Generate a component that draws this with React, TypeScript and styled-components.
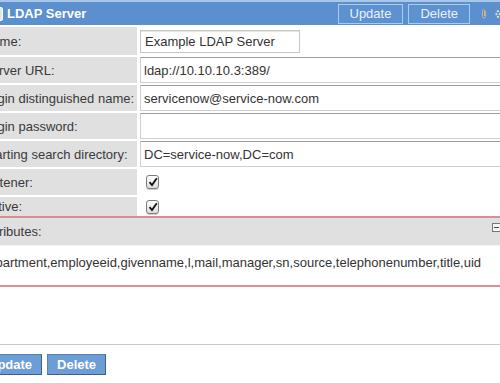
import React from 'react';
import styled, { createGlobalStyle } from 'styled-components';

const GlobalStyle = createGlobalStyle`
  html, body {
    margin: 0;
    padding: 0;
    background: #fff;
    overflow: hidden;
  }
  body {
    font-family: "Liberation Sans", Arial, sans-serif;
    font-size: 13px;
    color: #333;
  }
`;

// the screenshot is cropped, so the page sticks out on both sides
const Page = styled.div`
  margin-left: -22px;
  width: 540px;
`;

const Header = styled.div`
  height: 23px;
  border-top: 2px solid #a9c6e8;
  background: #5b8fcd;
  display: flex;
  align-items: center;
  padding: 0 12px 0 11px;
`;

const FormIcon = styled.span`
  width: 12px;
  height: 12px;
  border: 1px solid #fff;
  border-radius: 2px;
  background: #dfe8f3;
  flex: none;
`;

const Title = styled.span`
  margin-left: 4px;
  font-weight: bold;
  color: #fff;
  font-size: 13px;
`;

const HeaderActions = styled.div`
  margin-left: auto;
  display: flex;
  align-items: center;
  gap: 5px;
`;

const HeaderButton = styled.button`
  height: 20px;
  padding: 0 11px;
  border: 1px solid #a9cbee;
  background: #5d92d0;
  color: #e9f0f9;
  font-family: "Liberation Sans", Arial, sans-serif;
  font-size: 13px;
`;

const HeaderIcons = styled.div`
  display: flex;
  align-items: center;
  gap: 6px;
  margin-left: 10px;
`;

const Form = styled.div`
  display: grid;
  grid-template-columns: 159px 1fr;
  column-gap: 2px;
  row-gap: 2px;
  margin-top: 2px;
`;

const Label = styled.div<{ $h: number }>`
  height: ${p => p.$h}px;
  background: #e0e0e0;
  padding-left: 5px;
  display: flex;
  align-items: center;
  white-space: nowrap;
  color: #3a3a3a;
`;

const Value = styled.div<{ $h: number }>`
  height: ${p => p.$h}px;
  display: flex;
  align-items: center;
`;

const ShortInput = styled.div`
  margin-left: 1px;
  width: 160px;
  height: 23px;
  box-sizing: border-box;
  border: 1px solid #c6c6c6;
  box-shadow: inset 0 1px 1px #e4e4e4;
  padding-left: 4px;
  display: flex;
  align-items: center;
  color: #333;
`;

const WideInput = styled.div`
  margin-left: 1px;
  flex: 1;
  height: 26px;
  box-sizing: border-box;
  border: 1px solid #cfcfcf;
  border-top-color: #9d9d9d;
  padding-left: 3px;
  display: flex;
  align-items: center;
  color: #333;
  white-space: nowrap;
`;

const Check = styled.span`
  margin-left: 7px;
  width: 13px;
  height: 14px;
  box-sizing: border-box;
  border: 1px solid #7c7c7c;
  border-radius: 3px;
  background: linear-gradient(#ffffff, #dcdcdc);
  box-shadow: 0 1px 0 #d0d0d0;
  display: flex;
  align-items: center;
  justify-content: center;
`;

const AttrBox = styled.div`
  border-top: 2px solid #dc8d8d;
  border-bottom: 2px solid #dc8d8d;
`;

const AttrHead = styled.div`
  height: 27px;
  background: #e0e0e0;
  padding: 0 17px 0 5px;
  display: flex;
  align-items: center;
  justify-content: space-between;
  color: #3a3a3a;
`;

const Collapse = styled.span`
  width: 9px;
  height: 9px;
  box-sizing: border-box;
  border: 1px solid #777;
  background: #f4f4f4;
  display: flex;
  align-items: center;
  justify-content: center;
  margin-top: -8px;
  &:after {
    content: '';
    width: 5px;
    height: 1px;
    background: #444;
  }
`;

const AttrText = styled.div`
  height: 40px;
  border-top: 1px solid #f2f2f2;
  padding: 9px 0 0 3px;
  box-sizing: border-box;
  white-space: nowrap;
  color: #333;
`;

const Divider = styled.div`
  margin-top: 57px;
  height: 1px;
  background: #c8c8c8;
`;

const Footer = styled.div`
  display: flex;
  gap: 5px;
  margin-top: 9px;
`;

const FooterButton = styled.button`
  height: 21px;
  padding: 0 9px;
  border: 1px solid #5a82b4;
  border-right-color: #3e5f88;
  border-bottom-color: #3e5f88;
  background: #6d9dd5;
  color: #fff;
  font-weight: bold;
  font-family: "Liberation Sans", Arial, sans-serif;
  font-size: 13px;
`;

const Clip = () => (
  <svg width="8" height="12" viewBox="0 0 8 12">
    <path d="M5.5 3v5.5a1.5 1.5 0 0 1-3 0V2.5a1 1 0 0 1 2 0V8" fill="none" stroke="#c9b38a" strokeWidth="1" />
  </svg>
);

const Gear = () => (
  <svg width="12" height="12" viewBox="0 0 12 12">
    <circle cx="6" cy="6" r="3.5" fill="none" stroke="#e8dcc4" strokeWidth="2" strokeDasharray="2 1.2" />
    <circle cx="6" cy="6" r="1.2" fill="#e8dcc4" />
  </svg>
);

const Tick = () => (
  <svg width="10" height="10" viewBox="0 0 10 10">
    <path d="M1.5 5.2 L4 8 L8.8 1.2" fill="none" stroke="#111" strokeWidth="1.8" />
  </svg>
);

const textRows = [
  { label: 'Server URL:', value: 'ldap://10.10.10.3:389/' },
  { label: 'Login distinguished name:', value: 'servicenow@service-now.com' },
  { label: 'Login password:', value: '' },
  { label: 'Starting search directory:', value: 'DC=service-now,DC=com' },
];

export default function App() {
  return (
    <Page>
      <GlobalStyle />
      <Header>
        <FormIcon />
        <Title>LDAP Server</Title>
        <HeaderActions>
          <HeaderButton>Update</HeaderButton>
          <HeaderButton>Delete</HeaderButton>
        </HeaderActions>
        <HeaderIcons>
          <Clip />
          <Gear />
        </HeaderIcons>
      </Header>

      <Form>
        <Label $h={28}>Name:</Label>
        <Value $h={28}>
          <ShortInput>Example LDAP Server</ShortInput>
        </Value>

        {textRows.map(r => (
          <React.Fragment key={r.label}>
            <Label $h={26}>{r.label}</Label>
            <Value $h={26}>
              <WideInput>{r.value}</WideInput>
            </Value>
          </React.Fragment>
        ))}

        <Label $h={26}>Listener:</Label>
        <Value $h={26}>
          <Check><Tick /></Check>
        </Value>

        <Label $h={19}>Active:</Label>
        <Value $h={19}>
          <Check><Tick /></Check>
        </Value>
      </Form>

      <AttrBox>
        <AttrHead>
          <span>Attributes:</span>
          <Collapse />
        </AttrHead>
        <AttrText>department,employeeid,givenname,l,mail,manager,sn,source,telephonenumber,title,uid</AttrText>
      </AttrBox>

      <Divider />
      <Footer>
        <FooterButton>Update</FooterButton>
        <FooterButton>Delete</FooterButton>
      </Footer>
    </Page>
  );
}
